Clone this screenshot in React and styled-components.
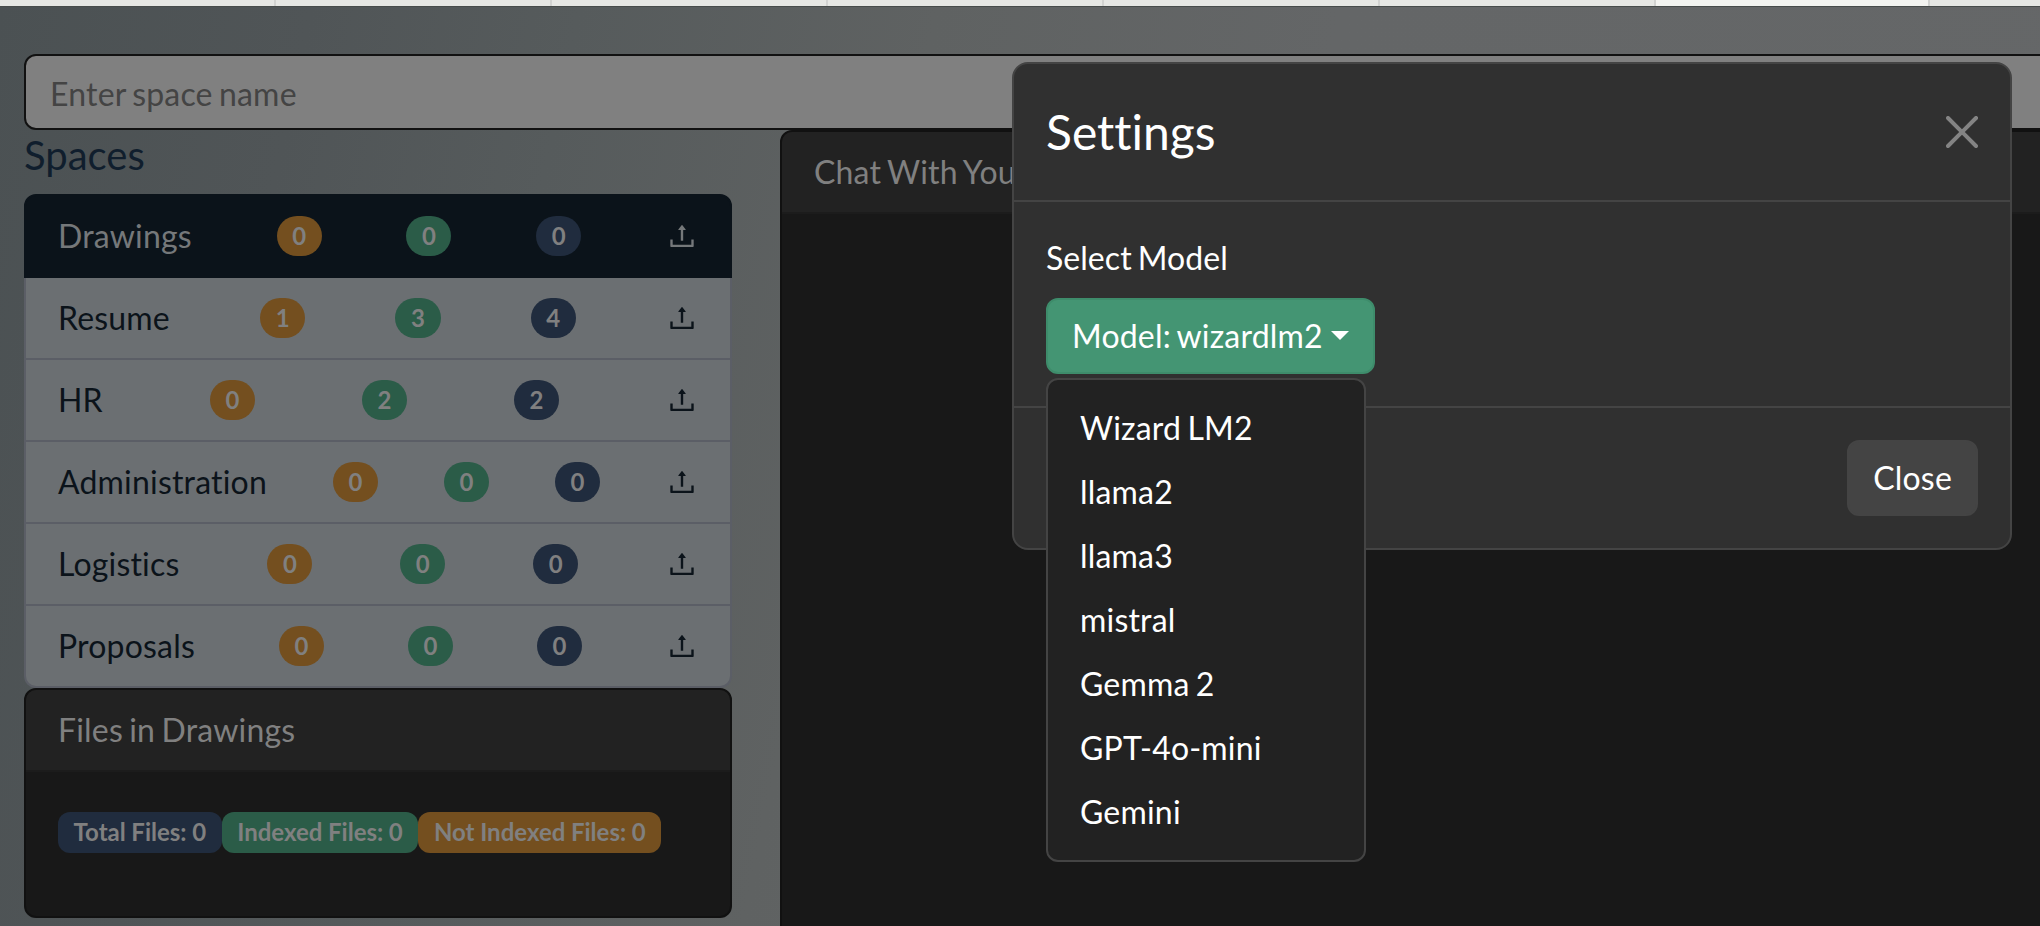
import React from "react";
import styled, { createGlobalStyle } from "styled-components";
import { AiOutlineUpload } from "react-icons/ai";

const GlobalStyle = createGlobalStyle`
  *, *::before, *::after { box-sizing: border-box; }
  body {
    margin: 0;
    font-family: Lato, "Liberation Sans", sans-serif;
    font-size: 32px;
    line-height: 48px;
    letter-spacing: 0.19px;
    word-spacing: -2.1px;
    font-variant-ligatures: none;
    color: #fff;
    overflow: hidden;
  }
  input, button {
    letter-spacing: inherit;
    word-spacing: inherit;
  }
`;

const tone = { orange: "#744f1f", green: "#2b5c48", blue: "#202c3e" };

const Page = styled.div`
  position: relative;
  display: flex;
  flex-direction: column;
  height: 926px;
  overflow: hidden;
  background: linear-gradient(102deg, #4b5153 0%, #505557 14%, #565b5c 26%, #5f6262 42%, #646667 60%, #656768 100%);
`;

const TabStrip = styled.div`
  display: flex;
  flex: none;
  height: 7px;
  border-bottom: 1px solid #474c4b;
  background: #e6e7e4;
`;

const Tab = styled.div`
  flex: none;
  width: ${(p) => p.$width || 276}px;
  border-right: 2px solid #d2d3d1;
  background: ${(p) => (p.$active ? "#f3f4f1" : "#e6e7e4")};
`;

const Content = styled.main`
  display: flex;
  flex-direction: column;
  flex: 1;
  width: 2100px;
  padding: 47px 24px 0;
`;

const SpaceInput = styled.input`
  display: block;
  width: 100%;
  height: 76px;
  padding: 13px 24px 11px;
  border: 2px solid #111;
  border-radius: 12px;
  background: #808080;
  font: inherit;
  font-variant-ligatures: none;
  outline: none;
  &::placeholder { color: #444; opacity: 1; }
`;

const Columns = styled.div`
  display: flex;
  flex: 1;
  gap: 48px;
`;

const Sidebar = styled.aside`
  flex: none;
  width: 708px;
`;

const Heading = styled.h5`
  margin: 0 0 15px;
  padding-top: 1px;
  font-size: 40px;
  font-weight: 400;
  line-height: 48px;
  letter-spacing: 0;
  color: #101e2d;
`;

const SpaceList = styled.ul`
  margin: 0;
  padding: 0;
  list-style: none;
`;

const SpaceItem = styled.li`
  display: flex;
  align-items: center;
  justify-content: space-between;
  padding: 16px 32px;
  border: 2px solid ${(p) => (p.$active ? "#0b131a" : "#5b5e66")};
  background: ${(p) => (p.$active ? "#0b131a" : "#6b6f72")};
  color: ${(p) => (p.$active ? "#75787a" : "#0b131a")};
  & + & { border-top: 0; }
  &:first-child { border-radius: 12px 12px 0 0; }
  &:last-child { border-radius: 0 0 12px 12px; }
`;

const UploadIcon = styled(AiOutlineUpload)`
  display: block;
  width: 32px;
  height: 32px;
`;

const Badge = styled.span`
  display: block;
  padding: 8.4px 15.6px;
  border-radius: ${(p) => (p.$pill ? "800px" : "12px")};
  background: ${(p) => tone[p.$tone]};
  color: #808080;
  font-size: 24px;
  font-weight: 700;
  line-height: 24px;
  letter-spacing: 0;
  word-spacing: -0.2px;
  white-space: nowrap;
`;

const Card = styled.section`
  display: flex;
  flex-direction: column;
  border: 2px solid #111;
  border-radius: 12px;
  background: #181818;
  overflow: hidden;
`;

const FilesCard = styled(Card)`
  height: 230px;
`;

const ChatCard = styled(Card)`
  flex: 1;
  height: 840px;
`;

const CardHeader = styled.header`
  flex: none;
  padding: 16px 32px;
  border-bottom: 2px solid #1c1c1c;
  background: #222;
  color: #808080;
`;

const FileCounts = styled.div`
  display: flex;
  padding: 40px 32px;
`;

const Modal = styled.div`
  position: absolute;
  top: 62px;
  left: 1012px;
  width: 1000px;
  border: 2px solid #444;
  border-radius: 16px;
  background: #303030;
`;

const ModalHeader = styled.header`
  display: flex;
  align-items: center;
  justify-content: space-between;
  padding: 32px;
  border-bottom: 2px solid #444;
`;

const ModalTitle = styled.h4`
  margin: 0;
  font-size: 48px;
  font-weight: 400;
  line-height: 72px;
  letter-spacing: 0;
`;

const DismissButton = styled.button`
  display: block;
  padding: 0;
  border: 0;
  background: none;
  color: #848484;
  svg { display: block; width: 32px; height: 32px; }
`;

const ModalBody = styled.div`
  padding: 32px;
`;

const Label = styled.div`
  margin-bottom: 16px;
  letter-spacing: 0.05px;
`;

const Dropdown = styled.div`
  position: relative;
`;

const Button = styled.button`
  display: block;
  height: 76px;
  padding: 12px 24px;
  border: 2px solid ${(p) => (p.$success ? "#3e8c6b" : "#444")};
  border-radius: 12px;
  background: ${(p) => (p.$success ? "#449573" : "#444")};
  color: #fff;
  font: inherit;
  font-variant-ligatures: none;
  white-space: nowrap;
`;

const Caret = styled.span`
  display: inline-block;
  margin-left: 8.6px;
  vertical-align: 8.16px;
  border-top: 9.6px solid;
  border-right: 9.6px solid transparent;
  border-left: 9.6px solid transparent;
`;

const Menu = styled.ul`
  position: absolute;
  top: 80px;
  left: 0;
  width: 320px;
  margin: 0;
  padding: 16px 0;
  border: 2px solid #444;
  border-radius: 12px;
  background: #222;
  list-style: none;
`;

const MenuItem = styled.li`
  padding: 8px 32px;
`;

const ModalFooter = styled.footer`
  display: flex;
  justify-content: flex-end;
  padding: 32px;
  border-top: 2px solid #444;
`;

const spaces = [
  { name: "Drawings", counts: [0, 0, 0], active: true },
  { name: "Resume", counts: [1, 3, 4] },
  { name: "HR", counts: [0, 2, 2] },
  { name: "Administration", counts: [0, 0, 0] },
  { name: "Logistics", counts: [0, 0, 0] },
  { name: "Proposals", counts: [0, 0, 0] },
];

const models = ["Wizard LM2", "llama2", "llama3", "mistral", "Gemma 2", "GPT-4o-mini", "Gemini"];

export default function App() {
  return (
    <>
      <GlobalStyle />
      <Page>
        <TabStrip>
          {[276, 276, 276, 276, 276, 276].map((w, i) => (
            <Tab key={i} $width={w} />
          ))}
          <Tab $width={274} $active />
        </TabStrip>
        <Content>
          <SpaceInput placeholder="Enter space name" />
          <Columns>
            <Sidebar>
              <Heading>Spaces</Heading>
              <SpaceList>
                {spaces.map((s) => (
                  <SpaceItem key={s.name} $active={s.active}>
                    <span>{s.name}</span>
                    <Badge $pill $tone="orange">{s.counts[0]}</Badge>
                    <Badge $pill $tone="green">{s.counts[1]}</Badge>
                    <Badge $pill $tone="blue">{s.counts[2]}</Badge>
                    <UploadIcon />
                  </SpaceItem>
                ))}
              </SpaceList>
              <FilesCard>
                <CardHeader>Files in Drawings</CardHeader>
                <FileCounts>
                  <Badge $tone="blue">Total Files: 0</Badge>
                  <Badge $tone="green">Indexed Files: 0</Badge>
                  <Badge $tone="orange">Not Indexed Files: 0</Badge>
                </FileCounts>
              </FilesCard>
            </Sidebar>
            <ChatCard>
              <CardHeader>Chat With You</CardHeader>
            </ChatCard>
          </Columns>
        </Content>
        <Modal role="dialog">
          <ModalHeader>
            <ModalTitle>Settings</ModalTitle>
            <DismissButton aria-label="Close">
              <svg viewBox="0 0 16 16" fill="currentColor">
                <path d="M.293.293a1 1 0 0 1 1.414 0L8 6.586 14.293.293a1 1 0 1 1 1.414 1.414L9.414 8l6.293 6.293a1 1 0 0 1-1.414 1.414L8 9.414l-6.293 6.293a1 1 0 0 1-1.414-1.414L6.586 8 .293 1.707a1 1 0 0 1 0-1.414z" />
              </svg>
            </DismissButton>
          </ModalHeader>
          <ModalBody>
            <Label>Select Model</Label>
            <Dropdown>
              <Button $success>
                Model: wizardlm2
                <Caret />
              </Button>
              <Menu>
                {models.map((m) => (
                  <MenuItem key={m}>{m}</MenuItem>
                ))}
              </Menu>
            </Dropdown>
          </ModalBody>
          <ModalFooter>
            <Button>Close</Button>
          </ModalFooter>
        </Modal>
      </Page>
    </>
  );
}
